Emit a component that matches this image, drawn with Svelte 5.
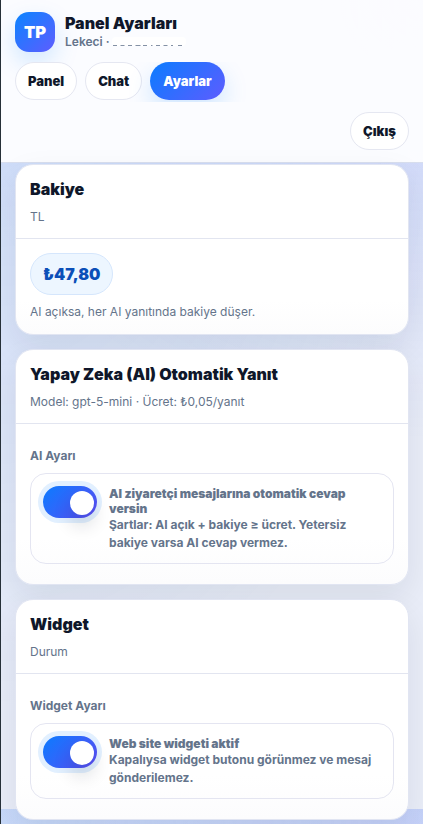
<script lang="ts">
	const tabs = ['Panel', 'Chat', 'Ayarlar'];
	let activeTab = $state('Ayarlar');
	let aiEnabled = $state(true);
	let widgetEnabled = $state(true);
</script>

<div class="page">
	<header class="topbar">
		<div class="brand">
			<div class="logo">TP</div>
			<div class="brand-text">
				<div class="brand-title">Panel Ayarları</div>
				<div class="brand-sub">
					Lekeci ·
					<svg class="masked" width="74" height="12" viewBox="0 0 74 12" aria-hidden="true">
						<rect width="74" height="9" y="1" rx="4" fill="#fff" />
						<path
							d="M1 9.5h4M8.5 9.5h4M16 9.5h4M23.5 9.5h5M31 9.5h4M39 9.5h1.5M44 9.5h4M51.5 9.5h4M59 9.5h2M66 9.5h4"
							stroke="#8491a5"
							stroke-width="1"
						/>
					</svg>
				</div>
			</div>
		</div>
		<nav class="tabs">
			{#each tabs as tab}
				<button class="pill" class:active={activeTab === tab} onclick={() => (activeTab = tab)}>{tab}</button>
			{/each}
		</nav>
		<div class="actions">
			<button class="pill">Çıkış</button>
		</div>
	</header>

	<main class="content">
		<section class="card">
			<div class="card-head">
				<h2>Bakiye</h2>
				<p>TL</p>
			</div>
			<div class="card-body balance">
				<span class="amount">₺47,80</span>
				<p class="hint">AI açıksa, her AI yanıtında bakiye düşer.</p>
			</div>
		</section>

		<section class="card">
			<div class="card-head">
				<h2>Yapay Zeka (AI) Otomatik Yanıt</h2>
				<p>Model: gpt-5-mini · Ücret: ₺0,05/yanıt</p>
			</div>
			<div class="card-body">
				<div class="label">AI Ayarı</div>
				<label class="option">
					<input type="checkbox" bind:checked={aiEnabled} />
					<span class="switch"></span>
					<span class="option-text">
						<strong>AI ziyaretçi mesajlarına otomatik cevap versin</strong>
						<span>Şartlar: AI açık + bakiye ≥ ücret. Yetersiz bakiye varsa AI cevap vermez.</span>
					</span>
				</label>
			</div>
		</section>

		<section class="card">
			<div class="card-head">
				<h2>Widget</h2>
				<p>Durum</p>
			</div>
			<div class="card-body">
				<div class="label">Widget Ayarı</div>
				<label class="option">
					<input type="checkbox" bind:checked={widgetEnabled} />
					<span class="switch"></span>
					<span class="option-text">
						<strong>Web site widgeti aktif</strong>
						<span>Kapalıysa widget butonu görünmez ve mesaj gönderilemez.</span>
					</span>
				</label>
			</div>
		</section>
	</main>
</div>

<style>
	:global(body) {
		overflow: hidden;
	}

	.page {
		box-sizing: border-box;
		height: 824px;
		overflow: hidden;
		border-left: 1px solid #263038;
		font-family: Inter, 'Liberation Sans', sans-serif;
		color: #0f172a;
		background-color: #e9edf8;
		background-image:
			radial-gradient(460px 750px at 0% 0%, rgba(30, 120, 255, 0.15), transparent 100%),
			radial-gradient(500px 440px at 100% 0%, rgba(60, 100, 255, 0.2), transparent 100%);
		background-size: 100% 809px;
	}

	.topbar {
		box-sizing: border-box;
		height: 163px;
		padding: 12px 14px;
		display: flex;
		flex-direction: column;
		gap: 10px;
		background: rgba(253, 253, 255, 0.96);
		border-bottom: 1px solid #d8deee;
	}

	.brand {
		display: flex;
		align-items: center;
		gap: 10px;
	}

	.logo {
		width: 40px;
		height: 40px;
		border-radius: 14px;
		display: grid;
		place-items: center;
		color: #fff;
		font-size: 16.5px;
		font-weight: 900;
		background: linear-gradient(135deg, #0a84ff, #5e5cff);
		box-shadow: 0 10px 24px rgba(10, 132, 255, 0.18);
	}

	.brand-text {
		padding-bottom: 1px;
	}

	.brand-title {
		font-size: 16px;
		font-weight: 900;
		line-height: 19px;
	}

	.brand-sub {
		display: flex;
		align-items: center;
		gap: 2px;
		margin-top: 2px;
		font-size: 12px;
		font-weight: 600;
		line-height: 14px;
		color: #64748b;
	}

	.tabs {
		display: flex;
		gap: 8px;
		height: 40px;
		margin: 0 -14px;
		padding: 0 14px;
		overflow: hidden;
	}

	.actions {
		display: flex;
		justify-content: flex-end;
	}

	.pill {
		box-sizing: border-box;
		height: 38px;
		padding: 0 12px;
		border: 1px solid #e5e7f1;
		border-radius: 19px;
		background: #fff;
		color: #0f172a;
		font-family: inherit;
		font-size: 13px;
		font-weight: 900;
		cursor: pointer;
	}

	.pill.active {
		border-color: transparent;
		color: #fff;
		background: linear-gradient(135deg, #0a7cff, #5e5cff) border-box;
		box-shadow: 0 10px 24px rgba(10, 132, 255, 0.18);
	}

	.content {
		display: flex;
		flex-direction: column;
		gap: 14px;
		padding: 1px 14px 14px;
	}

	.card {
		overflow: hidden;
		border: 1px solid #e1e5f2;
		border-radius: 18px;
		background: linear-gradient(#fff 80%, #fcfcfd);
		box-shadow: 0 12px 32px rgba(15, 23, 42, 0.08);
	}

	.card-head {
		box-sizing: border-box;
		height: 74px;
		padding: 14px;
		border-bottom: 1px solid #e2e5f0;
	}

	h2 {
		margin: 0;
		font-size: 16px;
		font-weight: 900;
		line-height: 20px;
	}

	.card-head p,
	.hint {
		margin: 0;
		color: #64748b;
		font-size: 12px;
		line-height: 18px;
	}

	.card-head p {
		margin-top: 9px;
	}

	.card-body {
		padding: 24px 14px 20px;
	}

	.card-body.balance {
		padding: 14px 14px 13px;
	}

	.amount {
		box-sizing: border-box;
		height: 42px;
		display: inline-flex;
		align-items: center;
		padding: 0 12px;
		border: 1px solid #d5e6fc;
		border-radius: 21px;
		background: #edf6ff;
		color: #0b4fb8;
		font-size: 16px;
		font-weight: 900;
	}

	.hint {
		margin-top: 8px;
	}

	.label {
		margin-bottom: 10px;
		color: #64748b;
		font-size: 12px;
		font-weight: 700;
		line-height: 15px;
	}

	.option {
		display: flex;
		align-items: flex-start;
		gap: 12px;
		padding: 12px 12px 10.5px;
		border: 1px solid #e4e5f1;
		border-radius: 16px;
		color: #64748b;
		font-size: 12px;
		font-weight: 700;
		cursor: pointer;
	}

	.option input {
		display: none;
	}

	.switch {
		box-sizing: border-box;
		flex: none;
		width: 54px;
		height: 32px;
		padding: 4px 3px;
		border-radius: 16px;
		background: #cbd5e1;
	}

	.switch::after {
		content: '';
		display: block;
		width: 24px;
		height: 24px;
		margin-top: 1px;
		border-radius: 50%;
		background: #fff;
		box-shadow: 0 10px 18px rgba(15, 23, 42, 0.16);
	}

	input:checked + .switch {
		background: linear-gradient(135deg, #0a7cff, #5e4cf5);
		box-shadow: 0 0 0 5px #e2f0ff;
	}

	input:checked + .switch::after {
		margin-left: auto;
	}

	.option-text {
		flex: 1;
		padding-top: 1.2px;
	}

	.option-text strong {
		display: block;
		font-weight: 900;
		line-height: 14.5px;
	}

	.option-text span {
		display: block;
		line-height: 18px;
	}
</style>
